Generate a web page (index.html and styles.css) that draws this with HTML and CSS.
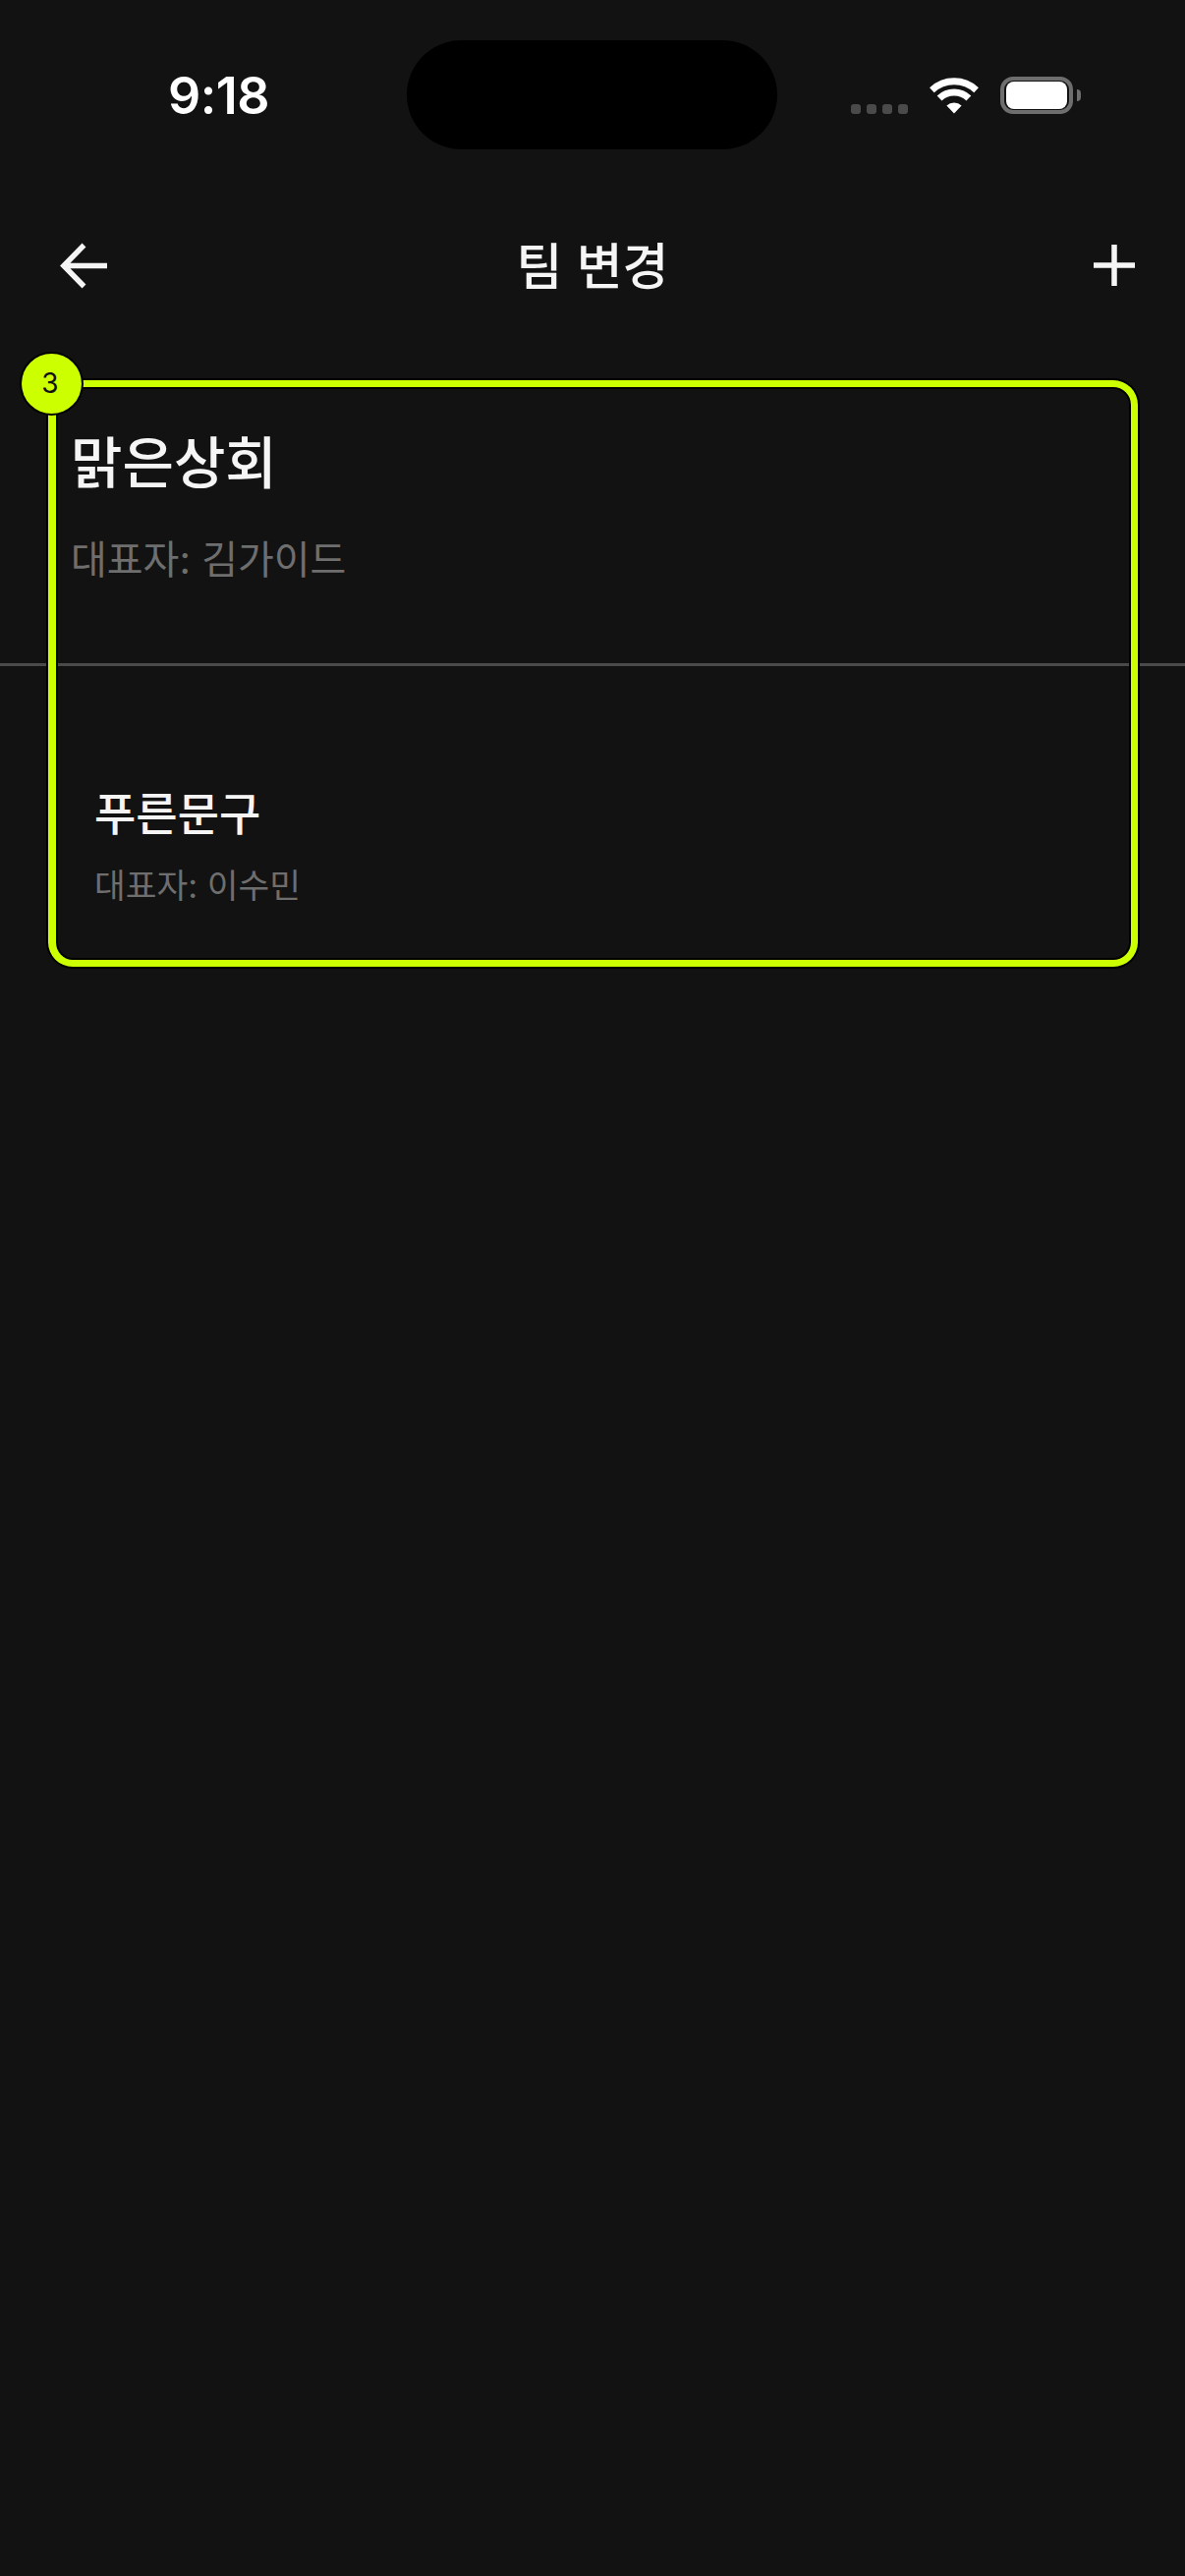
FILE: index.html
```html
<!doctype html>
<html lang="ko">
  <head>
    <meta charset="utf-8">
    <title>팀 변경</title>
    <link rel="stylesheet" href="styles.css">
  </head>
  <body>
    <div class="status-bar">
      <span class="time">9:18</span>
      <div class="island"></div>
      <div class="status-icons">
        <div class="signal"><i></i><i></i><i></i><i></i></div>
        <svg class="wifi" width="50" height="37" viewBox="0 0 50 37">
          <path d="M25 36.6 17.4 28.6A11 11 0 0 1 32.6 28.6Z" fill="#fff"/>
          <path d="M10.1 20.9A21.5 21.5 0 0 1 39.9 20.9" fill="none" stroke="#fff" stroke-width="7"/>
          <path d="M2.4 12.7A33 33 0 0 1 47.6 12.7" fill="none" stroke="#fff" stroke-width="6.8"/>
        </svg>
        <div class="battery"><div class="battery-level"></div></div>
        <div class="battery-nub"></div>
      </div>
    </div>

    <header class="nav">
      <svg class="nav-back" width="48" height="47" viewBox="0 0 48 47">
        <path d="M48 23.5H4M24.5 2.5 3.9 23.5l20.6 21" fill="none" stroke="#f5f5f5" stroke-width="5.5"/>
      </svg>
      <h1 class="nav-title">팀 변경</h1>
      <svg class="nav-add" width="42" height="42" viewBox="0 0 42 42">
        <path d="M21 0V42M0 21H42" fill="none" stroke="#f5f5f5" stroke-width="5.5"/>
      </svg>
    </header>

    <main class="teams">
      <section class="team team-current">
        <h2>맑은상회</h2>
        <p>대표자: 김가이드</p>
      </section>
      <section class="team team-other">
        <h2>푸른문구</h2>
        <p>대표자: 이수민</p>
      </section>
      <div class="coach-frame"></div>
      <div class="coach-badge">3</div>
    </main>
  </body>
</html>
```

FILE: styles.css
```css
html, body { margin: 0; padding: 0; }
body { width: 1206px; height: 2622px; background: #121212; color: #f5f5f5; font-family: "Noto Sans CJK KR", "Noto Sans", sans-serif; overflow: hidden; }
h1, h2, p { margin: 0; font-weight: 500; }

.status-bar { position: relative; height: 190px; display: flex; justify-content: space-between; padding: 0 106px 0 171px; box-sizing: border-box; }
.time { font: 600 52px/60px Inter, sans-serif; color: #fff; margin-top: 68px; letter-spacing: -0.5px; }
.island { position: absolute; left: 414px; top: 41px; width: 377px; height: 111px; border-radius: 56px; background: #000; }
.status-icons { display: flex; align-items: flex-end; height: 116px; }
.signal { display: flex; gap: 6px; margin-right: 22px; }
.signal i { width: 10px; height: 10px; border-radius: 3px; background: #4a4a4a; }
.wifi { margin-right: 22px; }
.battery { width: 74px; height: 38px; box-sizing: border-box; border: 4px solid #6e6e6e; border-radius: 13px; padding: 1px 2px; }
.battery-level { height: 100%; background: #fff; border-radius: 8px; }
.battery-nub { width: 4px; height: 12px; margin: 0 0 13px 4px; background: #6e6e6e; border-radius: 0 6px 6px 0; }

.nav { display: grid; grid-template-columns: 1fr auto 1fr; align-items: center; height: 160px; padding: 0 51px; box-sizing: border-box; }
.nav-back { margin-left: 10px; }
.nav-add { justify-self: end; }
.nav-title { font-size: 51px; line-height: 60px; font-weight: 500; margin-bottom: 5px; }

.teams { position: relative; }
.team p { font-family: Inter, "Noto Sans CJK KR", sans-serif; color: #6e6e6e; font-weight: 400; }
.team-current { height: 328px; box-sizing: border-box; border-bottom: 3px solid #4a4a4a; padding: 82px 0 0 72px; }
.team-current h2 { font-size: 57px; line-height: 70px; }
.team-current p { font-size: 40px; line-height: 50px; margin-top: 43px; }
.team-other { padding: 117px 0 0 96px; }
.team-other h2 { font-size: 46px; line-height: 60px; }
.team-other p { font-size: 34.5px; line-height: 44px; margin-top: 25px; }

.coach-frame { position: absolute; left: 49px; top: 37px; width: 1109px; height: 597px; box-sizing: border-box; border: 7px solid #ccff00; border-left-width: 8px; border-radius: 25px; box-shadow: 0 0 0 2px #000, inset 0 0 0 2px #000; }
.coach-badge { position: absolute; left: 22px; top: 10px; width: 61px; height: 61px; box-sizing: border-box; padding-right: 3px; border-radius: 50%; background: #ccff00; box-shadow: 0 0 0 2px #000; color: #111; font: 400 28px/61px Inter, sans-serif; text-align: center; }
```
